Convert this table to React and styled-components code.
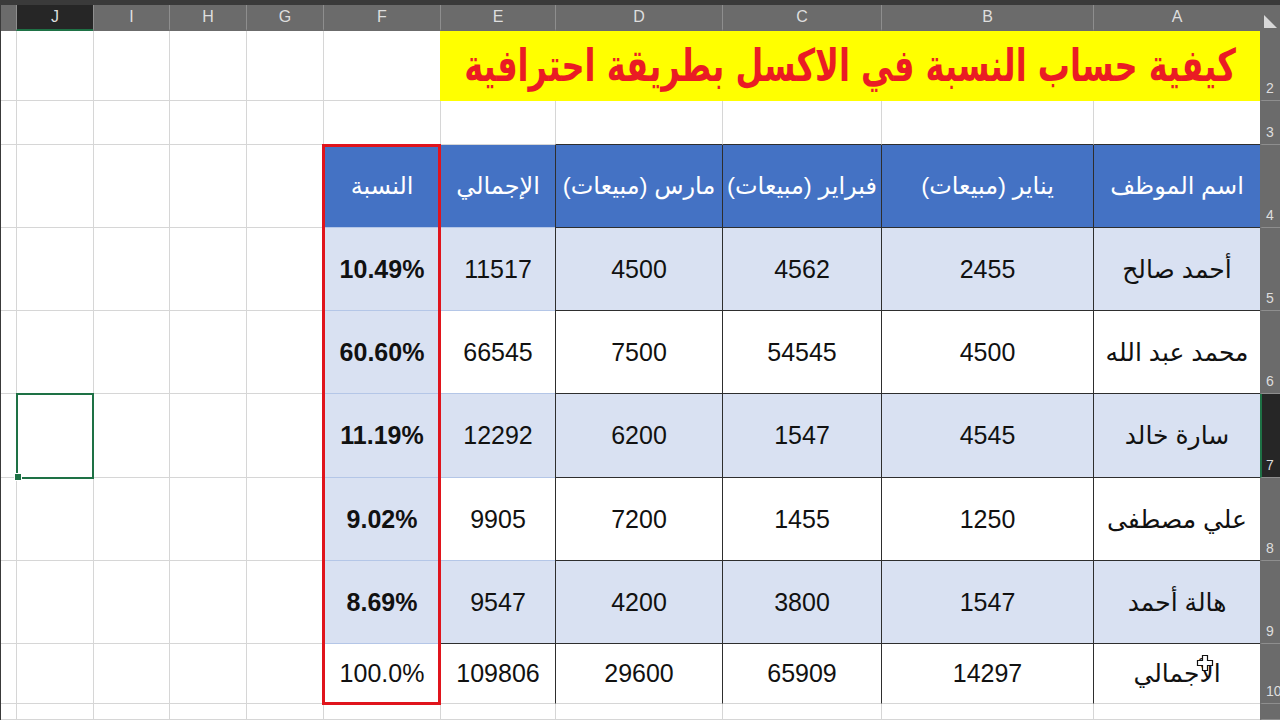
import React from "react";
import styled, { createGlobalStyle } from "styled-components";

const GlobalStyle = createGlobalStyle`
  html, body {
    margin: 0;
    padding: 0;
    background: #ffffff;
    overflow: hidden;
  }
  #root {
    width: 1280px;
    height: 720px;
  }
`;

// sheet columns from right to left (RTL workbook)
const COLUMNS = [
  { key: "A", width: 167 },
  { key: "B", width: 212 },
  { key: "C", width: 159 },
  { key: "D", width: 167 },
  { key: "E", width: 115 },
  { key: "F", width: 117 },
  { key: "G", width: 77 },
  { key: "H", width: 77 },
  { key: "I", width: 76 },
  { key: "J", width: 77 },
  { key: "K", width: 16 },
];

const ROW_HEIGHTS = [70, 44, 83, 83, 83, 84, 83, 83, 60, 16];
const SHEET_ROWS = [2, 3, 4, 5, 6, 7, 8, 9, 10, 11];

const HEADINGS = [
  "اسم الموظف",
  "يناير (مبيعات)",
  "فبراير (مبيعات)",
  "مارس (مبيعات)",
  "الإجمالي",
  "النسبة",
];

const EMPLOYEES = [
  ["أحمد صالح", 2455, 4562, 4500, 11517, "10.49%"],
  ["محمد عبد الله", 4500, 54545, 7500, 66545, "60.60%"],
  ["سارة خالد", 4545, 1547, 6200, 12292, "11.19%"],
  ["علي مصطفى", 1250, 1455, 7200, 9905, "9.02%"],
  ["هالة أحمد", 1547, 3800, 4200, 9547, "8.69%"],
];

const TOTAL = ["الأجمالي", 14297, 65909, 29600, 109806, "100.0%"];

const SELECTED_ROW = 7;
const SELECTED_COL = "J";

const EDGE = {
  none: "transparent",
  grid: "#d6d6d6",
  soft: "#b4c6e7",
  dark: "#2e2e2e",
};

const TONE = {
  plain: "#ffffff",
  band: "#d9e1f2",
  head: "#4472c4",
};

const TEXT_SIZE = {
  heading: "24px",
  name: "25px",
  number: "25px",
};

const Window = styled.div`
  width: 1280px;
  height: 720px;
  overflow: hidden;
  background: #ffffff;
  display: flex;
  flex-direction: column;
  font-family: "Liberation Sans", "DejaVu Sans", sans-serif;
  border-left: 1px solid #3a3a3a;
  box-sizing: border-box;
`;

const TopStrip = styled.div`
  height: 5px;
  flex: none;
  background: #3a3a3a;
`;

const Sheet = styled.div`
  direction: rtl;
  display: grid;
  grid-template-columns: 20px ${COLUMNS.map((c) => `${c.width}px`).join(" ")};
  grid-template-rows: 26px ${ROW_HEIGHTS.map((h) => `${h}px`).join(" ")};
  flex: none;
`;

const Corner = styled.div`
  grid-row: 1;
  grid-column: 1;
  background: #6b6b6b;
  display: flex;
  align-items: flex-end;
  justify-content: flex-start;
  padding: 0 3px 3px 0;
  box-sizing: border-box;
  overflow: hidden;
`;

const ColHead = styled.div`
  grid-row: 1;
  grid-column: ${(p) => p.$col};
  background: ${(p) => (p.$active ? "#262626" : "#6b6b6b")};
  border-left: 1px solid #8e8e8e;
  border-bottom: 2px solid ${(p) => (p.$active ? "#1e7145" : "#6b6b6b")};
  box-sizing: border-box;
  color: #dedede;
  font-size: 16px;
  display: flex;
  align-items: center;
  justify-content: center;
  overflow: hidden;
`;

const RowHead = styled.div`
  grid-column: 1;
  grid-row: ${(p) => p.$row};
  background: ${(p) => (p.$active ? "#262626" : "#6b6b6b")};
  border-bottom: 1px solid #8e8e8e;
  border-left: 2px solid ${(p) => (p.$active ? "#1e7145" : "#6b6b6b")};
  box-sizing: border-box;
  color: #dedede;
  font-size: 14px;
  direction: ltr;
  display: flex;
  align-items: flex-end;
  justify-content: flex-start;
  padding: 0 0 4px 4px;
  overflow: hidden;
  white-space: nowrap;
`;

const Cell = styled.div`
  position: relative;
  grid-row: ${(p) => p.$row};
  grid-column: ${(p) => p.$col};
  background: ${(p) => TONE[p.$tone]};
  border-left: 1px solid ${(p) => EDGE[p.$left]};
  border-bottom: 1px solid ${(p) => EDGE[p.$bottom]};
  box-sizing: border-box;
  color: ${(p) => (p.$tone === "head" ? "#ffffff" : "#111111")};
  font-size: ${(p) => TEXT_SIZE[p.$kind]};
  font-weight: ${(p) => (p.$bold ? 700 : 400)};
  display: flex;
  align-items: center;
  justify-content: center;
  overflow: hidden;
  white-space: nowrap;
`;

const Title = styled.div`
  grid-row: 2;
  grid-column: 2 / span 5;
  background: #ffff00;
  color: #ea1c24;
  font-family: "DejaVu Sans", sans-serif;
  font-size: 32px;
  font-weight: 700;
  display: flex;
  align-items: center;
  justify-content: center;
  white-space: nowrap;
  overflow: hidden;
`;

const TitleText = styled.span`
  display: inline-block;
  transform: scale(1, 1.4);
`;

const RedFrame = styled.div`
  grid-row: 4 / 11;
  grid-column: 7;
  margin: -1px;
  border: 3px solid #e0141c;
  pointer-events: none;
  z-index: 2;
`;

const Selection = styled.div`
  grid-row: ${SELECTED_ROW};
  grid-column: 11;
  margin: -1px -1px -1px 0;
  border: 2px solid #1e7145;
  position: relative;
  z-index: 2;
`;

const FillHandle = styled.span`
  position: absolute;
  left: -4px;
  bottom: -4px;
  width: 6px;
  height: 6px;
  background: #1e7145;
  border: 1px solid #ffffff;
`;

const Cursor = styled.svg`
  position: absolute;
  left: 102px;
  top: 10px;
  width: 18px;
  height: 18px;
`;

function cellFor(row, colIndex) {
  const key = COLUMNS[colIndex].key;
  const inTable = colIndex <= 5;
  const ruled = colIndex <= 3;
  const base = { $left: "grid", $bottom: "grid", $tone: "plain", $kind: "number", text: "" };

  if (row === 3 && ruled) return { ...base, $bottom: "dark" };
  if (row < 4 || row > 10 || !inTable) return base;

  let text;
  let tone = "plain";
  let bold = false;
  let kind = "number";
  if (row === 4) {
    text = HEADINGS[colIndex];
    tone = "head";
    kind = "heading";
  } else if (row === 10) {
    text = TOTAL[colIndex];
  } else {
    text = EMPLOYEES[row - 5][colIndex];
    tone = row % 2 === 1 || key === "F" ? "band" : "plain";
    bold = key === "F";
  }
  if (row > 4 && key === "A") kind = "name";

  let left = "grid";
  let bottom = "grid";
  if (ruled) {
    left = "dark";
    bottom = row === 10 ? "grid" : "dark";
  } else if (key === "E") {
    bottom = row === 9 ? "dark" : row === 10 ? "grid" : "soft";
  } else {
    bottom = row === 10 ? "grid" : "soft";
  }

  return { $left: left, $bottom: bottom, $tone: tone, $bold: bold, $kind: kind, text };
}

function PlusCursor() {
  return (
    <Cursor viewBox="0 0 18 18">
      <path
        d="M6.5 1.5h5v5h5v5h-5v5h-5v-5h-5v-5h5z"
        fill="#ffffff"
        stroke="#111111"
        strokeWidth="1.2"
        strokeLinejoin="miter"
      />
    </Cursor>
  );
}

export default function App() {
  return (
    <>
      <GlobalStyle />
      <Window>
        <TopStrip />
        <Sheet>
          <Corner>
            <svg width="13" height="13" viewBox="0 0 13 13">
              <path d="M0 0 L0 13 L13 13 Z" fill="#d8d8d8" />
            </svg>
          </Corner>
          {COLUMNS.map((c, i) => (
            <ColHead key={c.key} $col={i + 2} $active={c.key === SELECTED_COL}>
              {c.key === "K" ? "" : c.key}
            </ColHead>
          ))}
          {SHEET_ROWS.map((r) => (
            <RowHead key={r} $row={r} $active={r === SELECTED_ROW}>
              {r < 11 ? r : ""}
            </RowHead>
          ))}

          <Title>
            <TitleText>كيفية حساب النسبة في الاكسل بطريقة احترافية</TitleText>
          </Title>

          {SHEET_ROWS.map((r) =>
            COLUMNS.map((c, i) => {
              if (r === 2 && i <= 4) return null;
              const { text, ...look } = cellFor(r, i);
              return (
                <Cell key={`${c.key}${r}`} $row={r} $col={i + 2} {...look}>
                  {text}
                  {r === 10 && c.key === "A" && <PlusCursor />}
                </Cell>
              );
            })
          )}

          <RedFrame />
          <Selection>
            <FillHandle />
          </Selection>
        </Sheet>
      </Window>
    </>
  );
}
